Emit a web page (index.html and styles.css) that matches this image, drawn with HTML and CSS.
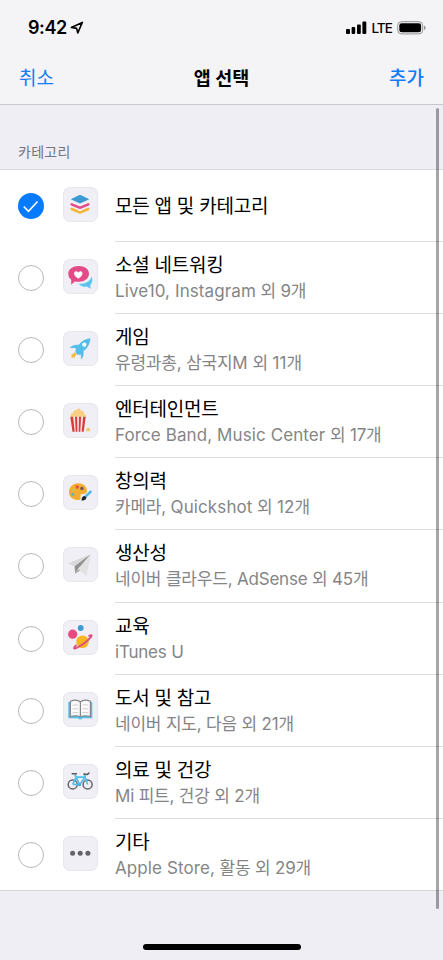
FILE: index.html
```html
<!DOCTYPE html>
<html lang="ko">
<head>
<meta charset="utf-8">
<meta name="viewport" content="width=device-width, initial-scale=1">
<title>앱 선택</title>
<link rel="stylesheet" href="styles.css">
</head>
<body>
<div class="screen">
  <header class="header">
    <div class="status">
      <span class="time">9:42</span>
      <svg class="location" width="14" height="14" viewBox="0 0 14 14"><path d="M1.400 6.400 12.300 1.400 7.800 12 6.600 7.400Z" fill="none" stroke="#000" stroke-width="1.600" stroke-linejoin="round"/></svg>
      <span class="spacer"></span>
      <svg class="signal" width="21" height="14" viewBox="0 0 21 14"><rect x="0" y="8" width="4" height="5" rx="1"/><rect x="5.600" y="6" width="3.600" height="7" rx="1"/><rect x="11" y="3.400" width="3.800" height="9.600" rx="1"/><rect x="16.400" y=".4" width="3.900" height="12.600" rx="1"/></svg>
      <span class="network">LTE</span>
      <svg class="battery" width="30" height="14" viewBox="0 0 30 14"><rect x=".7" y=".7" width="25" height="12.200" rx="3.700" fill="none" stroke="#929294"/><rect x="2.300" y="2.300" width="21.800" height="9" rx="2.300"/><path d="M27 4.500v4.600q1.700-.7 1.700-2.300T27 4.500Z" fill="#929294"/></svg>
    </div>
    <nav class="nav">
      <span class="cancel">취소</span>
      <h1 class="nav-title">앱 선택</h1>
      <span class="add">추가</span>
    </nav>
  </header>
  <h2 class="section">카테고리</h2>
  <main class="list">
    <div class="row">
      <span class="radio checked"><svg width="26" height="26" viewBox="0 0 26 26"><path d="m5.800 13.600 4.700 4.700L19.500 8.400" fill="none" stroke="#fff" stroke-width="1.500"/></svg></span>
      <svg class="icon" viewBox="0 0 35 35"><path d="M7.800 12.200 15.800 8.300q1.200-.6 2.400 0l8 3.900-8 3.800q-1.200.6-2.400 0Z" fill="#3d9bd1"/><path d="m8.700 17.300 7.200 3.100q1.100.5 2.200 0l7.200-3.100" fill="none" stroke="#e34a87" stroke-width="2.500" stroke-linecap="round"/><path d="m8.700 22 7.200 3.200q1.100.5 2.200 0l7.200-3.200" fill="none" stroke="#f4b632" stroke-width="2.500" stroke-linecap="round"/></svg>
      <div class="text single"><span class="name">모든 앱 및 카테고리</span></div>
    </div>
    <div class="row">
      <span class="radio"></span>
      <svg class="icon" viewBox="0 0 35 35"><path d="M28.800 17.400c1.100 3.600.6 6.500-1.500 8.500l.2 3.900-3.800-2.200c-3.400.5-6.200-.6-8-2.800 6.700.2 11.300-2.400 13.100-7.400Z" fill="#5bc4ef"/><path d="M15.700 7C9.800 7 5.300 10.100 5.300 14.800c0 2.600 1.100 4.600 2.900 6v5l3.600-3.400c1.200.3 2.500.4 3.900.4 5.800 0 10.300-3.200 10.300-8S21.500 7 15.700 7Z" fill="#e34a87" stroke="#f0eff5" stroke-width="1" paint-order="stroke"/><path d="M15.300 19.700c-7.800-4.800-3-9.800 0-6.200 3-3.600 7.800 1.400 0 6.200Z" fill="#fff"/></svg>
      <div class="text"><span class="name">소셜 네트워킹</span><span class="detail"><span class="latin">Live10, Instagram</span> 외 9개</span></div>
    </div>
    <div class="row">
      <span class="radio"></span>
      <svg class="icon" viewBox="0 0 35 35"><path d="M27.500 7.200c-5.300.6-9 2.800-11.600 6.500-4-.3-6.800.4-9.200 3.400 3-.2 5.300-.1 6.300.5-1 2-.7 4.800 1.200 6 1.300.5 2.500.2 3.300-.1.8 1.400.7 3 .1 5.100 3-2.500 3.500-5.500 2.800-8.400 4.300-3 6.500-7.200 7.100-13Z" fill="#54bee9"/><circle cx="21.300" cy="13.700" r="2.100" fill="#fff"/><path d="m11.300 21.300-1.300 2-2.200.3 1 1.100-.4 2.400 2-.8 1.300 1.300 0-2.300 2-1.700Z" fill="#f4b83d"/></svg>
      <div class="text"><span class="name">게임</span><span class="detail">유령과총, 삼국지<span class="latin">M</span> 외 <span class="latin">11</span>개</span></div>
    </div>
    <div class="row">
      <span class="radio"></span>
      <svg class="icon" viewBox="0 0 35 35"><path d="M8 14c-1.200-2 0-3.900 2-3.900.1-2.700 2.200-3.200 3.200-2.700 1-2.500 3.800-2.500 4.600 0 2.400 0 3.500 1.500 3 3 1.800.2 2.300 1.900 1.400 3.600Z" fill="#f8d083"/><path d="M7.300 13.700h15.400l-2 15H9.500Z" fill="#f8e7e4"/><path d="M7.300 13.700h2.800l1.600 15H9.500ZM12 13.700h2.100l.3 15h-1.700ZM16 13.700h2.100l-.8 15h-1.600ZM20.100 13.700h2.600l-2 15h-2Z" fill="#d83d3e"/><path d="M23 28.200q-.6-1.800 1-2.500.7-2 2-.6 1.800.6 1 3.100Z" fill="#f4c96d"/></svg>
      <div class="text"><span class="name">엔터테인먼트</span><span class="detail"><span class="latin">Force Band, Music Center</span> 외 17개</span></div>
    </div>
    <div class="row">
      <span class="radio"></span>
      <svg class="icon" viewBox="0 0 35 35"><path d="M15.200 8.300c5 0 8.800 3.200 8.800 7.200 0 2.800-1.800 3.400-4.200 3.500-2.200.1-2.600 1.100-2.200 3 .4 2-.5 3.200-3.200 3.100-5-.2-8.400-3.400-8.400-8 0-5 4-8.800 9.200-8.800Z" fill="#f2ad32"/><circle cx="14.200" cy="12" r="1.700" fill="#e84e45"/><circle cx="18.900" cy="13.500" r="1.700" fill="#765364"/><circle cx="10.400" cy="14.700" r="1.500" fill="#c4c65c"/><circle cx="9.700" cy="19.300" r="1.600" fill="#6caebe"/><path d="m27.500 16.700-5.300 5.200" stroke="#57b8e8" stroke-width="2.600" stroke-linecap="round"/><path d="m23.500 22.600-1.800-1.600c-2 .2-3 1.200-3.300 4.400 2.900.4 4.600-.5 5.100-2.800Z" fill="#20262c"/></svg>
      <div class="text"><span class="name">창의력</span><span class="detail">카메라, <span class="latin">Quickshot</span> 외 <span class="latin">12</span>개</span></div>
    </div>
    <div class="row">
      <span class="radio"></span>
      <svg class="icon" viewBox="0 0 35 35"><path d="M27.700 7.300 5.300 16.300l6.500 3.500 11.500 8.500Z" fill="#d9d9db"/><path d="M27.700 7.300 11.600 19.200l.6 7.400 2.600-4.700Z" fill="#929295"/><path d="m14.900 22 2.200 1.500-4.900 3.400Z" fill="#aaaaad"/><path d="M27.700 7.300 15.200 22l8.100 6.300Z" fill="#e2e2e2"/></svg>
      <div class="text"><span class="name">생산성</span><span class="detail">네이버 클라우드, <span>AdSense</span> 외 45개</span></div>
    </div>
    <div class="row">
      <span class="radio"></span>
      <svg class="icon" viewBox="0 0 35 35"><circle cx="9.700" cy="14.200" r="4.600" fill="#e84981"/><circle cx="17.700" cy="8" r="2.900" fill="#3d9bd1"/><circle cx="19.500" cy="21.700" r="6.300" fill="#f7b521"/><path d="M13 25.500c-3 3-2.500 4 1 2.200 4.800-2.500 10.700-7 13.600-10.300 2-2.300 1-2.800-1.500-1.500" fill="none" stroke="#df4a7d" stroke-width="1.800" stroke-linecap="round"/></svg>
      <div class="text"><span class="name">교육</span><span class="detail">iTunes U</span></div>
    </div>
    <div class="row">
      <span class="radio"></span>
      <svg class="icon" viewBox="0 0 35 35"><path d="M5.300 10h24v16.200h-9.800q-.8 1.200-2.300 1.200t-2.300-1.200H5.300Z" fill="#56bfe8"/><path d="M17.400 9.800C14.800 7.900 11 7.800 7.400 9.300v15.200c3.600-1 7.400-.9 10 .2 2.600-1.100 6.400-1.200 10-.2V9.300c-3.600-1.500-7.400-1.400-10 .5Z" fill="#fafafa" stroke="#85858a" stroke-width="1.200"/><path d="M17.400 9.800v15" stroke="#85858a" stroke-width="1.200"/><path d="M9.500 13.300q3-.9 5.800-.2m-5.800 4q3-.9 5.800-.2m-5.800 4q3-.9 5.800-.2m4.200-7.600q3-.7 5.800.2m-5.800 3.600q3-.7 5.800.2m-5.800 3.600q3-.7 5.800.2" fill="none" stroke="#c6cac7" stroke-width=".9"/></svg>
      <div class="text"><span class="name">도서 및 참고</span><span class="detail">네이버 지도, 다음 외 21개</span></div>
    </div>
    <div class="row">
      <span class="radio"></span>
      <svg class="icon" viewBox="0 0 35 35"><g fill="none" stroke="#65656a" stroke-width="1.500"><circle cx="9.700" cy="20.400" r="4.500"/><circle cx="24.600" cy="20.400" r="4.500"/></g><path d="m9.700 20.400 3.500-7.300h8.900l-5.500 7.600-4.600-10m-2.300 9.700 6.900.3m8-.3L21.300 10.200" fill="none" stroke="#54bee9" stroke-width="1.700" stroke-linejoin="round"/><path d="M9.200 9.700h4.200m7.500.3 3.600.4 1.500-1.400" fill="none" stroke="#55565c" stroke-width="1.500" stroke-linecap="round"/><circle cx="16.600" cy="20.800" r="1.500" fill="#3faedd"/></svg>
      <div class="text"><span class="name">의료 및 건강</span><span class="detail">Mi 피트, 건강 외 2개</span></div>
    </div>
    <div class="row">
      <span class="radio"></span>
      <svg class="icon" viewBox="0 0 35 35"><g fill="#646468"><circle cx="9.600" cy="17.200" r="2.500"/><circle cx="17.200" cy="17.200" r="2.500"/><circle cx="24.900" cy="17.200" r="2.500"/></g></svg>
      <div class="text"><span class="name">기타</span><span class="detail"><span class="latin">Apple Store,</span> 활동 외 29개</span></div>
    </div>
  </main>
  <div class="scrollbar"></div>
  <div class="home"></div>
</div>
</body>
</html>
```
FILE: styles.css
```css
* { box-sizing: border-box; }
body { margin: 0; background: #efeef4; font-family: Inter, "Noto Sans CJK KR", sans-serif; color: #000; }
.screen { position: relative; width: 443px; height: 960px; overflow: hidden; }
.header { height: 105px; background: #f4f4f7; border-bottom: 1px solid #c9c9cd; }
.status { display: flex; align-items: center; height: 55px; padding: 0 16px 0 28px; }
.time { font-size: 18px; font-weight: 600; letter-spacing: -.4px; }
.location { margin-left: 3px; }
.spacer { flex: 1; }
.network { margin: 1px 5px 0 4px; font-size: 13.5px; font-weight: 500; letter-spacing: -.9px; }
.nav { display: grid; grid-template-columns: 1fr auto 1fr; align-items: center; height: 47px; padding: 0 19px; font-size: 19px; line-height: 28px; color: #127bf8; }
.nav-title { margin: 0; padding-bottom: 1px; font-size: 18.5px; font-weight: 600; color: #000; }
.cancel { padding-top: 1px; font-weight: 400; }
.add { padding-top: 1px; font-weight: 500; text-align: right; }
.section { height: 64px; margin: 0; padding: 37px 18px 0; font-size: 14px; line-height: 20px; font-weight: 400; letter-spacing: .3px; color: #747479; }
.list { background: #fff; border-top: 1px solid #dcdce0; border-bottom: 1px solid #d5d5d9; }
.row { display: grid; grid-template-columns: 26px 35px 1fr; column-gap: 18.7px; height: 72.1px; padding-left: 18px; }
.radio { width: 26px; height: 26px; margin-top: 23px; border: 1px solid #b9b9bc; border-radius: 50%; }
.checked { border: 0; background: #087bfd; }
.radio svg { display: block; }
.icon { width: 35px; height: 35px; margin-top: 17px; border-radius: 7.5px; background: #f0eff5; box-shadow: inset 0 0 0 .8px #e6e5eb; }
.text { display: flex; flex-direction: column; height: 72.1px; margin-left: -1.4px; padding-top: 10px; border-bottom: 1px solid #dedee0; white-space: nowrap; }
.single { padding-top: 23px; }
.row:last-child { height: 71.1px; }
.row:last-child .text { height: 71.1px; border-bottom: 0; }
.name { font-size: 19px; line-height: 27px; letter-spacing: -.25px; }
.detail { margin-top: -1px; font-size: 17px; line-height: 26px; letter-spacing: -.2px; color: #858587; }
.latin { letter-spacing: .1px; }
.scrollbar { position: absolute; top: 108px; right: 4px; width: 3px; height: 801px; border-radius: 2px; background: rgba(0, 0, 0, .35); }
.home { position: absolute; bottom: 10px; left: 143px; width: 158px; height: 6px; border-radius: 3px; background: #000; }
```
